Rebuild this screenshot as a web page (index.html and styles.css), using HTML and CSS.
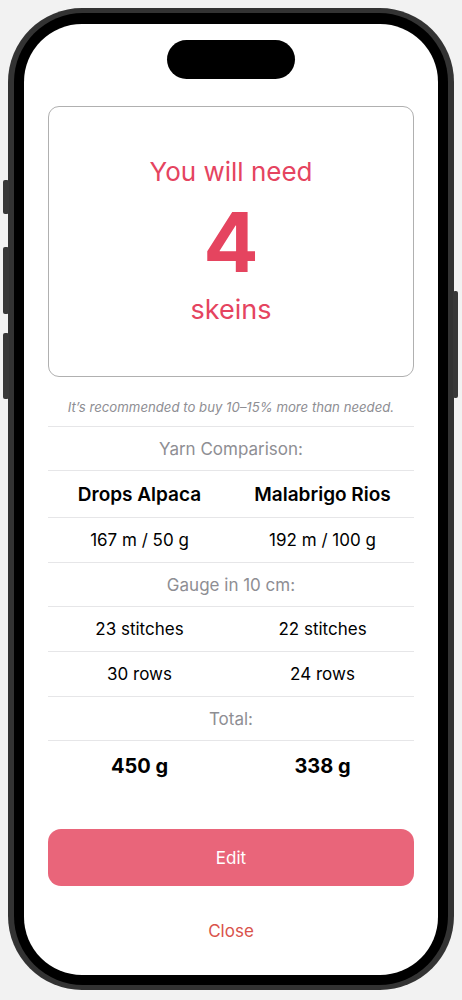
FILE: index.html
```html
<!DOCTYPE html>
<html lang="en">
<head>
  <meta charset="UTF-8">
  <meta name="viewport" content="width=device-width, initial-scale=1.0">
  <title>Yarn Result</title>
  <link rel="stylesheet" href="styles.css">
</head>
<body>
  <div class="phone">
    <span class="side-btn btn-mute"></span>
    <span class="side-btn btn-vol-up"></span>
    <span class="side-btn btn-vol-down"></span>
    <span class="side-btn btn-power"></span>
    <div class="bezel">
      <div class="screen">
        <div class="island"></div>

        <div class="result-card">
          <div class="need">You will need</div>
          <div class="count">4</div>
          <div class="unit">skeins</div>
        </div>

        <p class="note">It’s recommended to buy 10–15% more than needed.</p>

        <div class="compare">
          <div class="row heading">Yarn Comparison:</div>
          <div class="row pair names">
            <span>Drops Alpaca</span>
            <span>Malabrigo Rios</span>
          </div>
          <div class="row pair">
            <span>167 m / 50 g</span>
            <span>192 m / 100 g</span>
          </div>
          <div class="row heading">Gauge in 10 cm:</div>
          <div class="row pair">
            <span>23 stitches</span>
            <span>22 stitches</span>
          </div>
          <div class="row pair">
            <span>30 rows</span>
            <span>24 rows</span>
          </div>
          <div class="row heading">Total:</div>
          <div class="row pair totals">
            <span>450 g</span>
            <span>338 g</span>
          </div>
        </div>

        <button class="edit-btn">Edit</button>
        <button class="close-btn">Close</button>
      </div>
    </div>
  </div>
</body>
</html>
```

FILE: styles.css
```css
body {
  margin: 0;
  background-color: #f2f2f2;
  font-family: Inter, 'Noto Sans', sans-serif;
  color: #000;
}
.phone {
  position: relative;
  width: 446px;
  height: 982px;
  margin: 8px 0 0 8px;
  padding: 5px 6px;
  box-sizing: border-box;
  background: #333;
  border-radius: 74px;
}
.side-btn {
  position: absolute;
  width: 6px;
  background: #383838;
  border-radius: 2px;
}
.btn-mute {
  left: -5px;
  top: 172px;
  height: 34px;
}
.btn-vol-up {
  left: -5px;
  top: 239px;
  height: 67px;
}
.btn-vol-down {
  left: -5px;
  top: 325px;
  height: 66px;
}
.btn-power {
  right: -4px;
  top: 283px;
  height: 107px;
  width: 5px;
}
.bezel {
  height: 100%;
  padding: 11px 10px 10px;
  box-sizing: border-box;
  background: #000;
  border-radius: 69px;
}
.screen {
  height: 100%;
  background: #fff;
  border-radius: 58px;
  padding: 16px 24px 0;
  box-sizing: border-box;
  display: flex;
  flex-direction: column;
  align-items: stretch;
}
.island {
  align-self: center;
  width: 128px;
  height: 39px;
  background: #000;
  border-radius: 20px;
}
.result-card {
  margin-top: 27px;
  height: 271px;
  box-sizing: border-box;
  border: 1px solid #b0b0b0;
  border-radius: 11px;
  display: flex;
  flex-direction: column;
  align-items: center;
  justify-content: center;
  color: #e5445f;
  padding-bottom: 2px;
}
.need {
  font-size: 26px;
  line-height: 34px;
}
.count {
  font-size: 82px;
  font-weight: 700;
  line-height: 84px;
  margin: 12px 0 8px;
}
.unit {
  font-size: 27px;
  line-height: 34px;
}
.note {
  margin: 21px 0 10px;
  font-size: 13.2px;
  line-height: 18px;
  font-style: italic;
  color: #8e8e93;
  text-align: center;
}
.compare {
  display: flex;
  flex-direction: column;
}
.row {
  border-top: 1px solid #e6e6e8;
  height: 44px;
  box-sizing: border-box;
  display: flex;
  align-items: center;
  justify-content: center;
  font-size: 17px;
}
.heading {
  color: #8e8e93;
}
.pair {
  display: grid;
  grid-template-columns: 1fr 1fr;
  text-align: center;
  align-items: center;
  height: 45px;
}
.names {
  height: 47px;
  font-size: 19px;
  font-weight: 600;
}
.totals {
  height: 50px;
  font-size: 20px;
  font-weight: 700;
}
.edit-btn {
  margin-top: 39px;
  height: 57px;
  border: none;
  border-radius: 13px;
  background: #e9657a;
  color: #fff;
  font-family: inherit;
  font-size: 17px;
}
.close-btn {
  margin-top: 34px;
  border: none;
  background: none;
  color: #d9534c;
  font-family: inherit;
  font-size: 17px;
  line-height: 20px;
}
```
